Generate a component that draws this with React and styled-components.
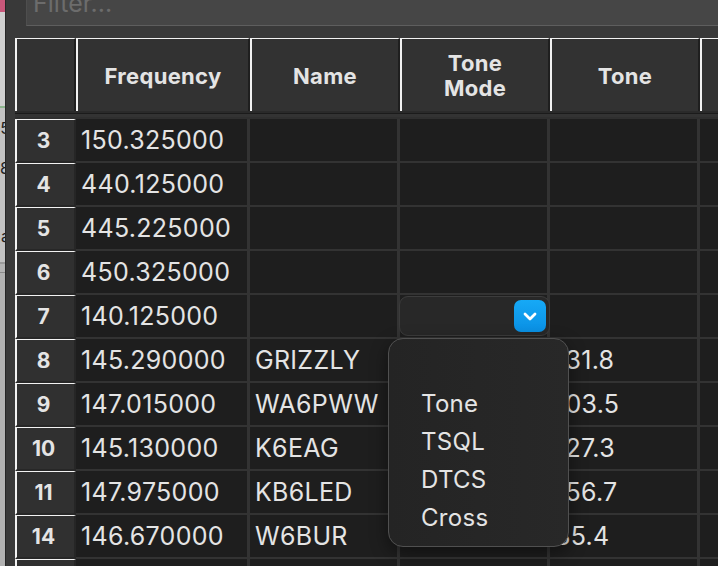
import React from 'react';
import styled, { createGlobalStyle } from 'styled-components';

const GlobalStyle = createGlobalStyle`
  html, body {
    margin: 0;
    padding: 0;
    background: #383838;
    overflow: hidden;
  }
  * { box-sizing: border-box; }
`;

const FONT = `Inter, "Liberation Sans", sans-serif`;

const Screen = styled.div`
  width: 718px;
  height: 566px;
  display: flex;
  overflow: hidden;
  font-family: ${FONT};
`;

// sliver of the window sitting behind
const Behind = styled.div`
  width: 5px;
  flex: none;
  display: flex;
  flex-direction: column;
  overflow: hidden;
  background: #b9b9b9;
`;

const Slice = styled.div`
  height: ${p => p.h}px;
  flex: none;
  overflow: hidden;
  background: ${p => p.bg};
  color: #1f1f1f;
  font-size: 16px;
  line-height: ${p => p.h}px;
  white-space: nowrap;
  display: flex;
  justify-content: flex-end;
  margin-right: -5px;
`;

const Edge = styled.div`
  width: 1px;
  flex: none;
  background: #262626;
`;

const Window = styled.div`
  flex: 1;
  min-width: 0;
  display: flex;
  flex-direction: column;
  background: #393939;
  padding-left: 9px;
`;

const FilterRow = styled.div`
  padding-left: 11px;
  margin-top: -19px;
  margin-bottom: 12px;
`;

const FilterInput = styled.div`
  height: 45px;
  width: 760px;
  background: #464646;
  border: 1px solid #4e4e4e;
  border-bottom: 1px solid #5e5e5e;
  color: #6c6c6c;
  font-size: 25px;
  line-height: 42px;
  padding-left: 6px;
`;

const Table = styled.div`
  display: grid;
  grid-template-columns: 61px 174px 150px 150px 150px 150px;
  width: max-content;
`;

const HeadCell = styled.div`
  height: 73px;
  background: #323232;
  border-top: 1px solid #f2f2f2;
  border-left: 2px solid #f2f2f2;
  border-right: 2px solid #1f1f1f;
  color: #e4e4e4;
  font-weight: 700;
  font-size: 22px;
  letter-spacing: 0.3px;
  line-height: 25px;
  padding-top: 2px;
  display: flex;
  align-items: center;
  justify-content: center;
  text-align: center;
  white-space: pre-line;
  overflow: hidden;
`;

const HeadGap = styled.div`
  grid-column: 1 / -1;
  height: 8px;
  background: linear-gradient(
    #2a2a2a 0, #2a2a2a 2px,
    #1b1b1b 2px, #1b1b1b 3px,
    #333 3px, #333 6px,
    #2f2f2f 6px
  );
`;

const RowHead = styled.div`
  height: 44px;
  background: #303030;
  border-top: 1.5px solid #f2f2f2;
  border-left: 2px solid #f2f2f2;
  border-right: 2px solid #262626;
  border-bottom: 2px solid #272727;
  color: #e4e4e4;
  font-weight: 700;
  font-size: 21px;
  padding-right: 4px;
  display: flex;
  align-items: center;
  justify-content: center;
`;

const Cell = styled.div`
  position: relative;
  height: 44px;
  background: #1e1e1e;
  border-right: 3px solid #333;
  border-bottom: 2px solid #333;
  color: #e4e4e4;
  font-size: 25px;
  letter-spacing: 0.3px;
  padding-left: 5px;
  display: flex;
  align-items: center;
  white-space: nowrap;
  overflow: ${p => (p.$open ? 'visible' : 'hidden')};
  z-index: ${p => (p.$open ? 2 : 0)};
`;

const Combo = styled.div`
  position: absolute;
  left: -1px;
  top: 1px;
  width: 151px;
  height: 40px;
  border-radius: 9px;
  background: #282828;
  border: 1px solid #3c3c3c;
  display: flex;
  align-items: center;
  justify-content: flex-end;
  padding-right: 3px;
`;

const ComboButton = styled.div`
  width: 32px;
  height: 32px;
  border-radius: 7px;
  background: linear-gradient(#16a9f6, #0a90e4);
  display: flex;
  align-items: center;
  justify-content: center;
`;

const Menu = styled.div`
  position: absolute;
  left: -12px;
  top: 41px;
  width: 181px;
  height: 209px;
  border-radius: 15px;
  background: linear-gradient(90deg, #242424, #282828);
  border: 1px solid #505050;
  box-shadow: 0 6px 18px rgba(0, 0, 0, 0.45);
  padding: 9px 0;
  display: flex;
  flex-direction: column;
`;

const MenuItem = styled.div`
  height: 38px;
  line-height: 38px;
  padding-left: 32px;
  color: #e4e4e4;
  font-size: 24px;
  letter-spacing: 0.3px;
`;

const Chevron = () => (
  <svg width="14" height="9" viewBox="0 0 14 9">
    <path d="M2 2 L7 7 L12 2" fill="none" stroke="#fff" strokeWidth="2.8" strokeLinecap="round" strokeLinejoin="round" />
  </svg>
);

const headers = ['', 'Frequency', 'Name', 'Tone\nMode', 'Tone', 'Tone\nSquelch'];

const rows = [
  { n: 3, freq: '150.325000', name: '', tone: '' },
  { n: 4, freq: '440.125000', name: '', tone: '' },
  { n: 5, freq: '445.225000', name: '', tone: '' },
  { n: 6, freq: '450.325000', name: '', tone: '' },
  { n: 7, freq: '140.125000', name: '', tone: '', open: true },
  { n: 8, freq: '145.290000', name: 'GRIZZLY', tone: '131.8' },
  { n: 9, freq: '147.015000', name: 'WA6PWW', tone: '103.5' },
  { n: 10, freq: '145.130000', name: 'K6EAG', tone: '127.3' },
  { n: 11, freq: '147.975000', name: 'KB6LED', tone: '156.7' },
  { n: 14, freq: '146.670000', name: 'W6BUR', tone: '85.4' },
  { n: 15, freq: '146.520000', name: 'SIMPLEX', tone: '' },
];

const toneModes = ['', 'Tone', 'TSQL', 'DTCS', 'Cross'];

const slices = [
  { h: 12, bg: '#c9577a' },
  { h: 94, bg: '#cfcfcf' },
  { h: 2, bg: '#8db58d' },
  { h: 12, bg: '#c2c2c2' },
  { h: 16, bg: '#c2c2c2', t: '5' },
  { h: 24, bg: '#c2c2c2' },
  { h: 16, bg: '#c2c2c2', t: '8' },
  { h: 52, bg: '#c2c2c2' },
  { h: 16, bg: '#c2c2c2', t: 'a' },
  { h: 18, bg: '#c2c2c2' },
  { h: 2, bg: '#9a9a9a' },
  { h: 8, bg: '#b4b4b4' },
  { h: 1, bg: '#8a8a8a' },
  { h: 293, bg: '#b2b2b2' },
];

export default function App() {
  return (
    <>
      <GlobalStyle />
      <Screen>
        <Behind>
          {slices.map((s, i) => (
            <Slice key={i} h={s.h} bg={s.bg}>{s.t || ''}</Slice>
          ))}
        </Behind>
        <Edge />
        <Window>
          <FilterRow>
            <FilterInput>Filter...</FilterInput>
          </FilterRow>
          <Table>
            {headers.map((h, i) => (
              <HeadCell key={i}>{h}</HeadCell>
            ))}
            <HeadGap />
            {rows.map(r => (
              <React.Fragment key={r.n}>
                <RowHead>{r.n}</RowHead>
                <Cell>{r.freq}</Cell>
                <Cell>{r.name}</Cell>
                <Cell $open={r.open}>
                  {r.open && (
                    <Combo>
                      <ComboButton><Chevron /></ComboButton>
                      <Menu>
                        {toneModes.map((m, i) => (
                          <MenuItem key={i}>{m}</MenuItem>
                        ))}
                      </Menu>
                    </Combo>
                  )}
                </Cell>
                <Cell>{r.tone}</Cell>
                <Cell />
              </React.Fragment>
            ))}
          </Table>
        </Window>
      </Screen>
    </>
  );
}
